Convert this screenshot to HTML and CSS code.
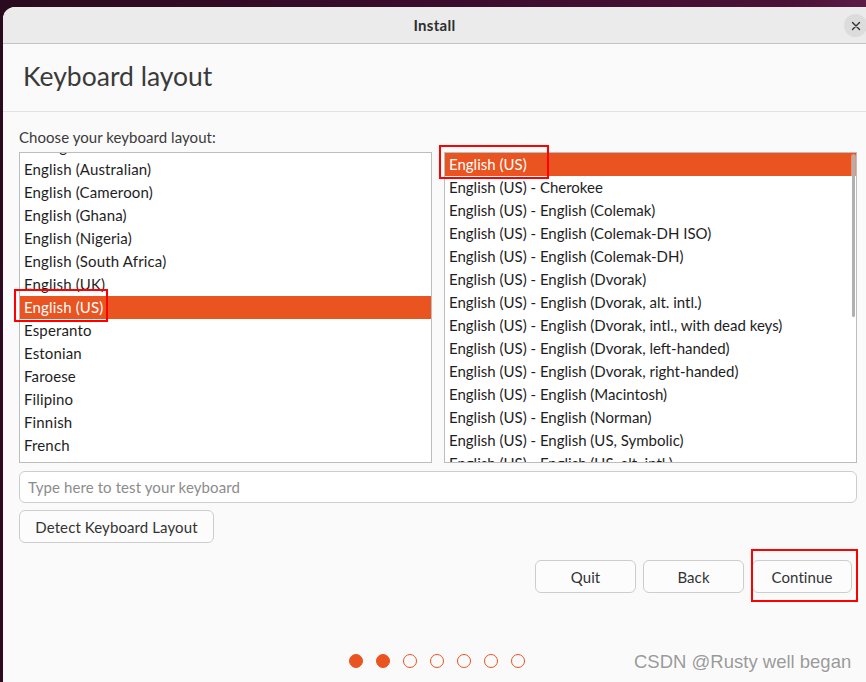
FILE: index.html
```html
<!DOCTYPE html>
<html lang="en">
<head>
<meta charset="utf-8">
<title>Install</title>
<link rel="stylesheet" href="styles.css">
</head>
<body>
<div class="window">
  <div class="headerbar">
    <div class="hb-side"></div>
    <div class="hb-title">Install</div>
    <div class="hb-side hb-right">
      <button class="close-btn" aria-label="Close">
        <svg width="10" height="10" viewBox="0 0 10 10"><path d="M1.5 1.5 L8.5 8.5 M8.5 1.5 L1.5 8.5" stroke="#2e2e2e" stroke-width="1.4" stroke-linecap="round" fill="none"/></svg>
      </button>
    </div>
  </div>
  <div class="page-head">
    <h1 class="page-title">Keyboard layout</h1>
  </div>
  <div class="content">
    <div class="label">Choose your keyboard layout:</div>
    <div class="lists">
      <div class="list">
        <div class="list-inner left-inner">
          <div class="row">Dzongkha</div>
          <div class="row">English (Australian)</div>
          <div class="row">English (Cameroon)</div>
          <div class="row">English (Ghana)</div>
          <div class="row">English (Nigeria)</div>
          <div class="row">English (South Africa)</div>
          <div class="row">English (UK)</div>
          <div class="row selected">English (US)</div>
          <div class="row">Esperanto</div>
          <div class="row">Estonian</div>
          <div class="row">Faroese</div>
          <div class="row">Filipino</div>
          <div class="row">Finnish</div>
          <div class="row">French</div>
          <div class="row">Friulian</div>
        </div>
      </div>
      <div class="list">
        <div class="list-inner right-inner">
          <div class="row selected">English (US)</div>
          <div class="row">English (US) - Cherokee</div>
          <div class="row">English (US) - English (Colemak)</div>
          <div class="row">English (US) - English (Colemak-DH ISO)</div>
          <div class="row">English (US) - English (Colemak-DH)</div>
          <div class="row">English (US) - English (Dvorak)</div>
          <div class="row">English (US) - English (Dvorak, alt. intl.)</div>
          <div class="row">English (US) - English (Dvorak, intl., with dead keys)</div>
          <div class="row">English (US) - English (Dvorak, left-handed)</div>
          <div class="row">English (US) - English (Dvorak, right-handed)</div>
          <div class="row">English (US) - English (Macintosh)</div>
          <div class="row">English (US) - English (Norman)</div>
          <div class="row">English (US) - English (US, Symbolic)</div>
          <div class="row">English (US) - English (US, alt. intl.)</div>
        </div>
        <div class="scrollbar"></div>
      </div>
    </div>
    <input class="test-input" type="text" placeholder="Type here to test your keyboard">
    <div class="detect-row">
      <button class="btn detect">Detect Keyboard Layout</button>
    </div>
    <div class="nav-row">
      <button class="btn nav quit">Quit</button>
      <button class="btn nav back">Back</button>
      <button class="btn nav cont">Continue</button>
    </div>
    <div class="dots">
      <span class="dot filled"></span>
      <span class="dot filled"></span>
      <span class="dot"></span>
      <span class="dot"></span>
      <span class="dot"></span>
      <span class="dot"></span>
      <span class="dot"></span>
    </div>
  </div>
</div>
<div class="mark mark-left"></div>
<div class="mark mark-right"></div>
<div class="mark mark-cont"></div>
<div class="watermark">CSDN @Rusty well began</div>
</body>
</html>
```

FILE: styles.css
```css
* { box-sizing: border-box; }
html, body { margin: 0; padding: 0; }
body {
  width: 866px;
  height: 682px;
  overflow: hidden;
  background: linear-gradient(100deg, #2a0a1e 0%, #3a0b2a 40%, #4a1236 80%, #7a2a5e 100%);
  font-family: "Lato", "Open Sans", sans-serif;
  position: relative;
}
.window {
  margin-left: 3px;
  margin-top: 7px;
  width: 863px;
  height: 675px;
  background: #fafafa;
  border-radius: 12px 0 0 0;
  overflow: hidden;
  display: flex;
  flex-direction: column;
}
.headerbar {
  height: 37px;
  flex: 0 0 37px;
  background: #ebebeb;
  border-bottom: 1px solid #c2c2c2;
  display: grid;
  grid-template-columns: 1fr auto 1fr;
  align-items: center;
}
.hb-title {
  font-weight: 700;
  font-size: 15px;
  color: #2e2e2e;
  letter-spacing: 0.3px;
}
.hb-right { display: flex; justify-content: flex-end; padding-right: 0; }
.close-btn {
  width: 23px;
  height: 23px;
  border-radius: 50%;
  border: none;
  background: #dcdcdc;
  padding: 0;
  display: flex;
  align-items: center;
  justify-content: center;
  margin-right: -1px;
  margin-top: 1px;
}
.page-head {
  height: 68px;
  flex: 0 0 68px;
  border-bottom: 1px solid #e2e2e2;
  padding-left: 20px;
}
.page-title {
  margin: 0;
  font-weight: 400;
  font-size: 26.5px;
  line-height: 30px;
  padding-top: 17px;
  color: #3a3a3a;
}
.content {
  padding: 16px 9px 0 16px;
  flex: 1;
  display: flex;
  flex-direction: column;
}
.label {
  font-size: 15px;
  letter-spacing: 0.05px;
  line-height: 18px;
  color: #3a3a3a;
  margin-bottom: 6px;
}
.lists {
  display: grid;
  grid-template-columns: 413px 413px;
  column-gap: 12px;
  height: 311px;
}
.list {
  position: relative;
  border: 1px solid #bdbdbd;
  background: #ffffff;
  overflow: hidden;
}
.left-inner { margin-top: -18px; }
.row {
  height: 23px;
  line-height: 23px;
  padding-left: 4px;
  font-size: 15px;
  letter-spacing: 0.15px;
  color: #1e1e1e;
  white-space: nowrap;
}
.right-inner .row { letter-spacing: 0; }
.row.selected {
  background: #e95420;
  color: #ffffff;
}
.scrollbar {
  position: absolute;
  right: 1px;
  top: 2px;
  width: 3px;
  height: 162px;
  border-radius: 2px;
  background: #b0b0b0;
  box-shadow: 0 0 0 1px rgba(255,255,255,0.35);
}
.test-input {
  margin-top: 8px;
  height: 32px;
  width: 838px;
  border: 1px solid #cdcdcd;
  border-radius: 6px;
  background: #ffffff;
  padding: 0 8px;
  font-family: "Lato", "Open Sans", sans-serif;
  font-size: 15px;
  letter-spacing: 0.1px;
  color: #333;
  outline: none;
}
.test-input::placeholder { color: #8c8c8c; }
.detect-row { margin-top: 7px; display: flex; }
.btn {
  height: 33px;
  border: 1px solid #cdcdcd;
  border-radius: 6px;
  background: #fcfcfc;
  font-family: "Lato", "Open Sans", sans-serif;
  font-size: 15px;
  letter-spacing: 0.1px;
  color: #333333;
  padding: 0;
}
.detect { width: 195px; }
.nav-row {
  margin-top: 17px;
  display: flex;
  justify-content: flex-end;
  padding-right: 5px;
}
.nav { width: 101px; }
.back { margin-left: 7px; }
.cont { margin-left: 8px; width: 100px; }
.dots {
  margin-top: 61px;
  display: flex;
  justify-content: center;
  gap: 13px;
  padding-right: 2px;
}
.dot {
  width: 14px;
  height: 14px;
  border-radius: 50%;
  border: 1.5px solid #e95420;
  background: transparent;
}
.dot.filled { background: #e95420; }
.mark {
  position: absolute;
  border: 2px solid #ff0000;
}
.mark-left { left: 14px; top: 289px; width: 94px; height: 33px; }
.mark-right { left: 439px; top: 145px; width: 110px; height: 34px; }
.mark-cont { left: 751px; top: 549px; width: 107px; height: 53px; }
.watermark {
  position: absolute;
  left: 634px;
  top: 651px;
  font-family: "Liberation Sans", Arial, sans-serif;
  font-size: 18.5px;
  line-height: 22px;
  color: #9a9a9a;
  text-shadow: 0 0 1px #fff, 1px 1px 0 #fff;
  white-space: nowrap;
}
```
